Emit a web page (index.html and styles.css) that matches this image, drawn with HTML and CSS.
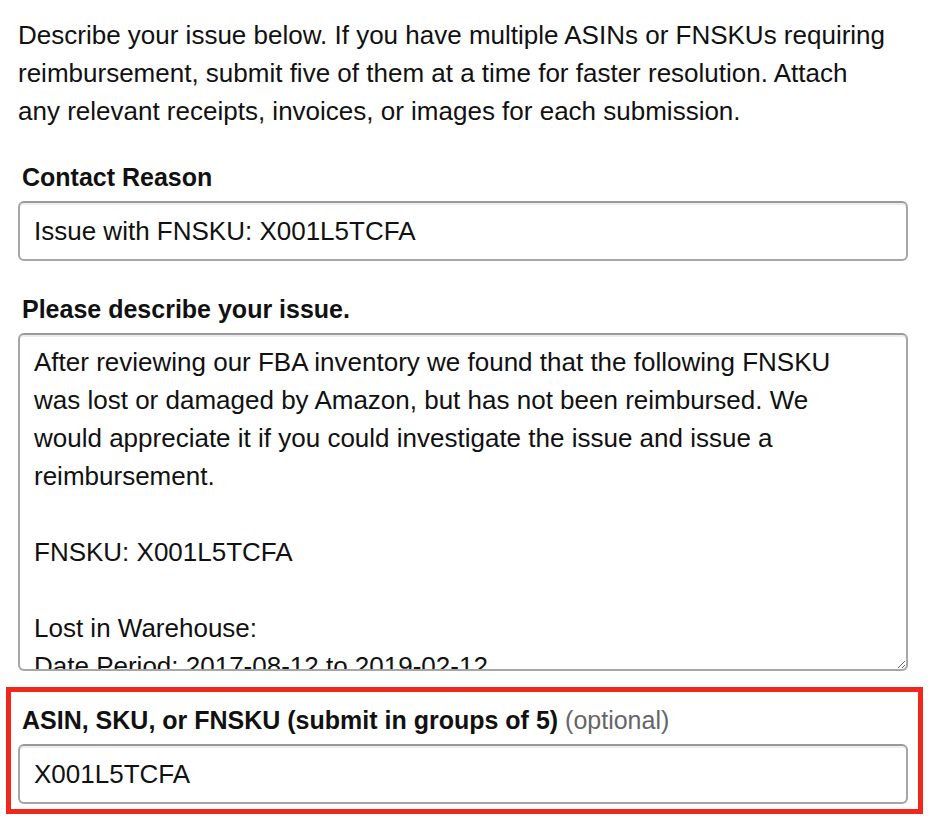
FILE: index.html
```html
<!DOCTYPE html>
<html lang="en">
<head>
<meta charset="utf-8">
<title>Contact form</title>
<link rel="stylesheet" href="styles.css">
</head>
<body>
<div class="page">
  <p class="intro">Describe your issue below. If you have multiple ASINs or FNSKUs requiring reimbursement, submit five of them at a time for faster resolution. Attach any relevant receipts, invoices, or images for each submission.</p>

  <div class="field">
    <label class="label" for="reason">Contact Reason</label>
    <input class="input" id="reason" type="text" value="Issue with FNSKU: X001L5TCFA">
  </div>

  <div class="field">
    <label class="label" for="desc">Please describe your issue.</label>
    <textarea class="textarea" id="desc">After reviewing our FBA inventory we found that the following FNSKU
was lost or damaged by Amazon, but has not been reimbursed. We
would appreciate it if you could investigate the issue and issue a
reimbursement.

FNSKU: X001L5TCFA

Lost in Warehouse:
Date Period: 2017-08-12 to 2019-02-12
Units: 1</textarea>
  </div>

  <div class="field highlight">
    <label class="label" for="asin">ASIN, SKU, or FNSKU (submit in groups of 5) <span class="optional">(optional)</span></label>
    <input class="input" id="asin" type="text" value="X001L5TCFA">
  </div>
</div>
</body>
</html>
```

FILE: styles.css
```css
html, body {
  margin: 0;
  padding: 0;
  background: #ffffff;
}

body {
  font-family: "Liberation Sans", Arial, sans-serif;
  color: #111111;
}

.page {
  width: 890px;
  padding: 16px 0 0 18px;
}

.intro {
  width: 873px;
  margin: 0;
  font-size: 26px;
  line-height: 38px;
  color: #111111;
}

.field {
  display: flex;
  flex-direction: column;
  gap: 5px;
  margin-top: 28px;
}

.field + .field {
  margin-top: 29px;
}

.label {
  display: block;
  padding-left: 4px;
  font-size: 25px;
  line-height: 38px;
  font-weight: bold;
  color: #111111;
}

.optional {
  font-weight: normal;
  color: #666666;
}

.input,
.textarea {
  box-sizing: border-box;
  width: 890px;
  margin: 0;
  border: 2px solid #a6a6a6;
  border-top-color: #9a9a9a;
  border-radius: 6px;
  box-shadow: inset 0 2px 0 rgba(0, 0, 0, 0.07);
  background: #ffffff;
  font-family: "Liberation Sans", Arial, sans-serif;
  font-size: 26px;
  color: #111111;
  outline: none;
}

.input {
  height: 60px;
  padding: 0 14px;
}

.textarea {
  display: block;
  height: 338px;
  padding: 8px 14px;
  line-height: 38px;
  overflow: hidden;
  resize: vertical;
}

.field.highlight {
  margin: 16px -15px 0 -12px;
  padding: 9px 10px 5px 7px;
  border: 5px solid #f0281c;
}
```
